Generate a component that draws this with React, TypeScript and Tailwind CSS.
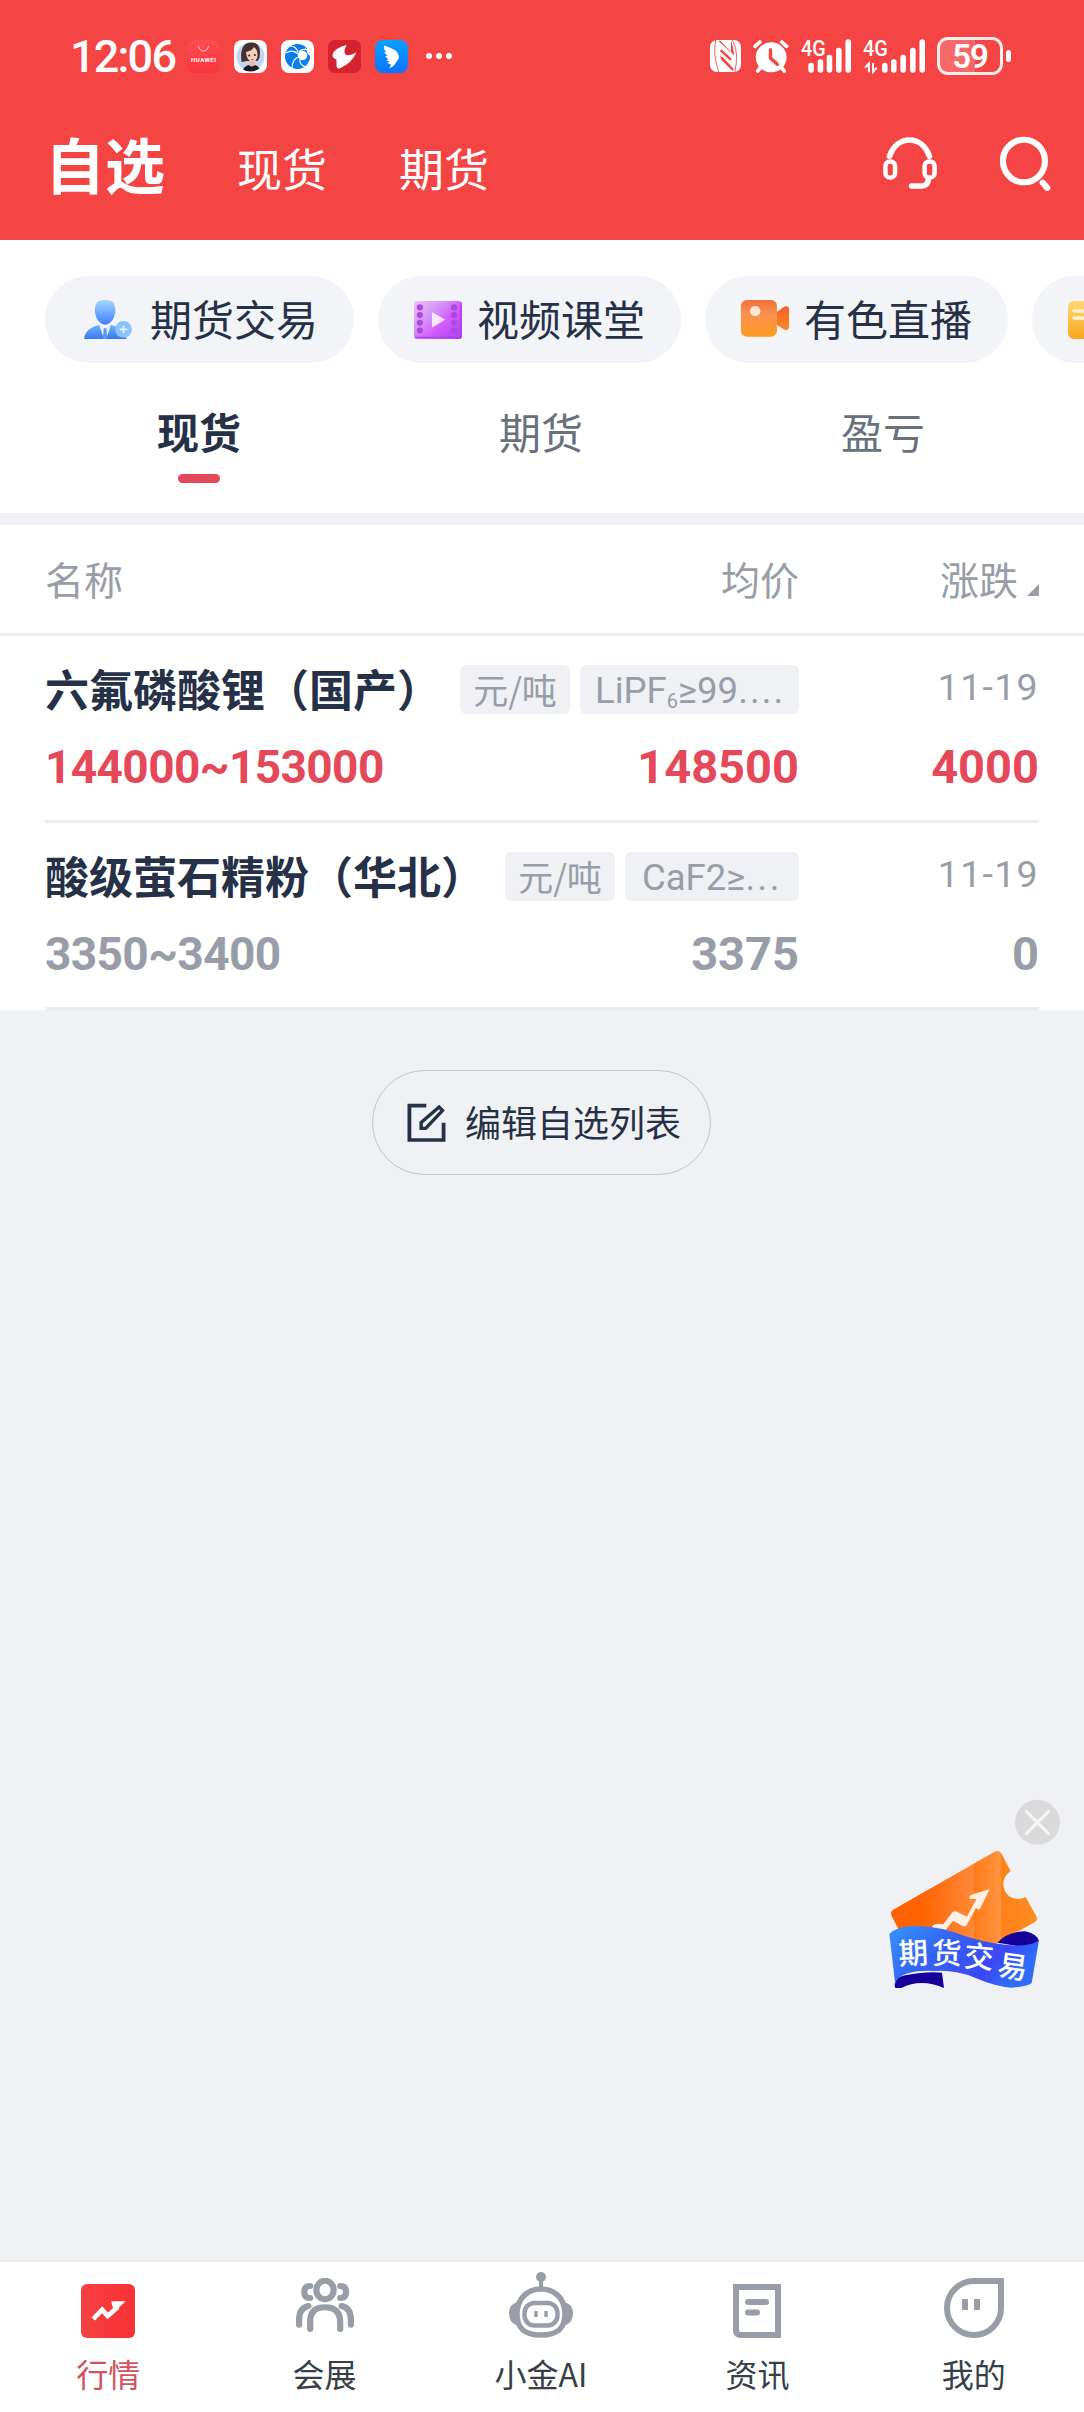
import type { ReactNode } from 'react'
import clsx from 'clsx'

const quotes = [
  {
    name: '六氟磷酸锂（国产）',
    unit: '元/吨',
    spec: <>LiPF<span className="relative top-[5px] text-[20px]">6</span>≥99<span className="tracking-[2.2px]">....</span></>,
    specClass: 'w-[219px] pl-[15px]',
    range: '144000~153000',
    avg: '148500',
    change: '4000',
    date: '11-19',
    up: true,
  },
  {
    name: '酸级萤石精粉（华北）',
    unit: '元/吨',
    spec: <>CaF2≥<span className="tracking-[2.5px]">...</span></>,
    specClass: 'w-[174px] pl-[17px]',
    range: '3350~3400',
    avg: '3375',
    change: '0',
    date: '11-19',
    up: false,
  },
]

function StatusBar() {
  return (
    <div className="flex h-[112px] items-center justify-between pl-[70px] pr-[73px]">
      <div className="flex items-center">
        <span className="mt-[2px] w-[117px] whitespace-nowrap font-['Roboto'] text-[45px] font-medium leading-[56px] tracking-[-1.8px]">12:06</span>
        <div className="flex gap-[14px]">
          {/* Huawei mall */}
          <svg className="h-[33px] w-[33px]" viewBox="0 0 33 33">
            <defs>
              <linearGradient id="hw" x1="0" y1="0" x2="0" y2="1">
                <stop offset="0" stopColor="#fd4d50" />
                <stop offset="1" stopColor="#f8343f" />
              </linearGradient>
            </defs>
            <rect width="33" height="33" rx="8" fill="url(#hw)" />
            <path d="M11.5 6q1 5 5 5t5-5" fill="none" stroke="#ffd9d9" strokeWidth="1" />
            <text x="16.5" y="21.5" textAnchor="middle" textLength="25" fontFamily="Roboto" fontWeight="700" fontSize="6" fill="#fff">HUAWEI</text>
          </svg>
          {/* avatar */}
          <svg className="h-[33px] w-[33px]" viewBox="0 0 33 33">
            <rect width="33" height="33" rx="8" fill="#fff" />
            <circle cx="16.5" cy="16.5" r="14" fill="#c3d7f1" />
            <path d="M7.500 22C6 10 9 2.500 17 2.500S27 8 25.500 18l-2 3H13z" fill="#45322f" />
            <path d="M12 12q6-1 8-5 4 3 3.500 9-1 6-5 6-6-1-6.500-10z" fill="#f3cdb9" />
            <path d="M15.500 21h5v5h-5z" fill="#e9b9a3" />
            <path d="M9 29.500q2-4 6-4.500 2.500 3 6 0 3 .5 4.500 3.500-4 3-9 3t-7.500-2z" fill="#1d1b22" />
            <circle cx="15.200" cy="15.500" r="1" fill="#2b2020" />
            <circle cx="20.800" cy="15" r="1" fill="#2b2020" />
            <path d="M17 19.500h2.500" stroke="#c7524f" strokeWidth="1" />
          </svg>
          {/* browser swirl */}
          <svg className="h-[33px] w-[33px]" viewBox="0 0 33 33">
            <rect width="33" height="33" rx="8" fill="#fff" />
            <circle cx="16.500" cy="16.500" r="12.500" fill="#0a7df0" />
            <circle cx="21.500" cy="15.500" r="4.700" fill="#fff" />
            <g fill="none" stroke="#fff" strokeWidth="1.200">
              <path d="M18 13Q19 8 29 10" />
              <path d="M17 14Q12 9 5 13" />
              <path d="M17.500 17Q11 19 11 29" />
              <path d="M19 19Q18 25 25 27" />
              <path d="M17 12Q15 6 9 6" />
            </g>
            <path d="M24 8q5 2 5.500 8l-3-2q0-3-2.500-6z" fill="#fff" />
          </svg>
          {/* red bird */}
          <svg className="h-[33px] w-[33px]" viewBox="0 0 33 33">
            <rect width="33" height="33" rx="7" fill="#d5242f" />
            <path d="M18.500 5Q6 8 4.500 15q0 3 4 4.500l0 7q1 3 4 1.500Q24 23 28.500 12q-6 4-10 3-4-2 0-10z" fill="#fff" />
          </svg>
          {/* blue wing */}
          <svg className="h-[33px] w-[33px]" viewBox="0 0 33 33">
            <defs>
              <linearGradient id="wing" x1="0" y1="0" x2="0" y2="1">
                <stop offset="0" stopColor="#08a0ff" />
                <stop offset="1" stopColor="#0874ff" />
              </linearGradient>
            </defs>
            <rect width="33" height="33" rx="8" fill="url(#wing)" />
            <path d="M9 5.500Q20 9 22 12q2 3 2 6l-5 7.500-4.500 3 1.500-4-4-1.500 2.500-1-3.500-2 2.500-.5-3.500-3.500 2.500 0-3.500-4 2.500.3Q8.500 10 9 5.500z" fill="#fff" />
          </svg>
        </div>
        <div className="ml-[18px] flex gap-[4px]">
          <i className="size-[6px] rounded-full bg-white" />
          <i className="size-[6px] rounded-full bg-white" />
          <i className="size-[6px] rounded-full bg-white" />
        </div>
      </div>

      <div className="flex items-center gap-[12px]">
        {/* NFC */}
        <svg className="h-[32px] w-[31px]" viewBox="486 122 90 95" preserveAspectRatio="none">
          <rect x="486" y="122" width="90" height="95" rx="20" fill="#fff" />
          <path d="M503 120q-5 22-3 45t12 54M550 120q12 20 13 45t-5 54" fill="none" stroke="#f54444" strokeWidth="2.500" />
          <path d="M510 124l37 36v-38q8 24 9 46l-39-43zM516 168l38 46-36-34z" fill="#f54444" />
          <path d="M517 152l30 29M519 173l34 38" stroke="#f54444" strokeWidth="7" />
        </svg>
        {/* alarm */}
        <svg className="h-[33px] w-[36px]" viewBox="610 120 105 99" preserveAspectRatio="none">
          <circle cx="663" cy="172" r="45" fill="#fff" />
          <g stroke="#fff" strokeWidth="11" strokeLinecap="round">
            <path d="M616 139l14-13M708 139l-14-13M632 202l-8 11M693 202l8 11" />
          </g>
          <path d="M661 149v26l20 18" fill="none" stroke="#f54444" strokeWidth="10" strokeLinecap="round" strokeLinejoin="round" />
        </svg>
        <svg className="h-[34px] w-[50px] overflow-visible" viewBox="750 115 144 102" preserveAspectRatio="none">
          <text x="750" y="165" textLength="71" lengthAdjust="spacingAndGlyphs" fontFamily="Roboto" fontWeight="500" fontSize="66" fill="#fff">4G</text>
          <g stroke="#fff" strokeWidth="16" strokeLinecap="round">
            <path d="M779 194v14M806 184v24M832 170v38M859 149v59M886 124v84" />
          </g>
        </svg>
        <svg className="h-[34px] w-[62px] overflow-visible" viewBox="929 115 179 102" preserveAspectRatio="none">
          <text x="929" y="165" textLength="72" lengthAdjust="spacingAndGlyphs" fontFamily="Roboto" fontWeight="500" fontSize="66" fill="#fff">4G</text>
          <g stroke="#fff" strokeWidth="16" strokeLinecap="round">
            <path d="M992 194v14M1018 184v24M1045 170v38M1073 149v59M1100 124v84" />
          </g>
          <path d="M946 215v-26l-11 12M958 187v26l11-12" fill="none" stroke="#fff" strokeWidth="6" />
        </svg>
        <div className="flex items-center gap-[3px]">
          <div className="flex h-[38px] w-[66px] items-center justify-center overflow-hidden rounded-[11px] border-[3px] border-white/90 bg-linear-to-r from-white/20 from-58% to-transparent to-58% font-['Roboto'] text-[33px] font-semibold leading-none tracking-[-1px]">
            59
          </div>
          <i className="h-[12px] w-[5px] rounded-full bg-white" />
        </div>
      </div>
    </div>
  )
}

function Header() {
  return (
    <header className="h-[240px] bg-[#f54444] text-white">
      <StatusBar />
      <div className="flex h-[102px] items-center pl-[45px] pr-[33px]">
        <h1 className="-mt-px text-[60px] font-bold leading-[60px]">自选</h1>
        <span className="ml-[72px] mt-[10px] text-[45px] leading-[60px]">现货</span>
        <span className="ml-[72px] mt-[10px] text-[45px] leading-[60px]">期货</span>
        <svg className="ml-auto h-[52px] w-[54px]" viewBox="986 413 157 155" preserveAspectRatio="none">
          <g fill="none" stroke="#fff" strokeLinecap="round">
            <path d="M1005 470c10-28 30-48 58-48s48 20 58 48" strokeWidth="17" />
            <rect x="993" y="486" width="28" height="48" rx="13" strokeWidth="13" />
            <rect x="1107" y="486" width="29" height="48" rx="13" strokeWidth="13" />
            <path d="M1118 536q0 23-20 23h-29" strokeWidth="16" />
          </g>
        </svg>
        <svg className="ml-[63px] h-[55px] w-[51px]" viewBox="1325 406 148 165" preserveAspectRatio="none">
          <ellipse cx="1394.500" cy="481" rx="61" ry="64" fill="none" stroke="#fff" strokeWidth="18" />
          <path d="M1449 546l13 16" stroke="#fff" strokeWidth="18" strokeLinecap="round" />
        </svg>
      </div>
    </header>
  )
}

function Chip({ icon, label, className }: { icon: ReactNode; label?: string; className?: string }) {
  return (
    <div className={clsx('flex h-[87px] shrink-0 items-center rounded-full bg-[#f2f4f8]', className)}>
      {icon}
      {label && <span className="-mt-[3px] whitespace-nowrap text-[42px] leading-[60px] text-[#263147]">{label}</span>}
    </div>
  )
}

function Chips() {
  return (
    <div className="flex gap-[24px] overflow-hidden pl-[45px] pt-[36px]">
      <Chip
        className="w-[309px] pl-[39px]"
        label="期货交易"
        icon={
          <svg className="mr-[18px] h-[41px] w-[48px] shrink-0" viewBox="242 146 141 123" preserveAspectRatio="none">
            <defs>
              <linearGradient id="head" x1="0" y1="0" x2="0" y2="1">
                <stop offset="0" stopColor="#a5dcfe" />
                <stop offset="1" stopColor="#3f7dff" />
              </linearGradient>
              <linearGradient id="suit" x1="0" y1="0" x2="0" y2="1">
                <stop offset="0" stopColor="#6cb4fd" />
                <stop offset="1" stopColor="#3a78f2" />
              </linearGradient>
            </defs>
            <path d="M304 148c22 0 30 10 30 32 0 20-12 43-30 43s-30-23-30-43c0-22 8-32 30-32z" fill="url(#head)" />
            <path d="M242 266c3-27 25-37 45-42l17 14 17-14c20 5 42 15 46 42z" fill="url(#suit)" />
            <path d="M287 224l11 34 6-20 6 20 11-34-17 12z" fill="#e4f1ff" />
            <path d="M300 234h8l2 32h-12z" fill="#5a9cfb" />
            <circle cx="358" cy="237" r="25" fill="#8cc3ff" />
            <path d="M358 226v22M347 237h22" stroke="#e6f4ff" strokeWidth="5" />
          </svg>
        }
      />
      <Chip
        className="w-[303px] pl-[36px]"
        label="视频课堂"
        icon={
          <svg className="mr-[15px] h-[38px] w-[48px] shrink-0" viewBox="1199 153 139 113" preserveAspectRatio="none">
            <defs>
              <linearGradient id="film" x1="0" y1="0" x2="1" y2=".8">
                <stop offset="0" stopColor="#efc4fb" />
                <stop offset=".4" stopColor="#d391f8" />
                <stop offset=".65" stopColor="#d45cff" />
                <stop offset="1" stopColor="#b04af3" />
              </linearGradient>
            </defs>
            <rect x="1199" y="153" width="139" height="113" rx="10" fill="url(#film)" />
            <path d="M1203 261h132V158" fill="none" stroke="#b03cf0" strokeWidth="4" />
            <g fill="#ae49dd">
              {[172, 195, 218, 241].map((y) => (
                <g key={y}>
                  <circle cx="1216" cy={y} r="9" />
                  <circle cx="1315" cy={y} r="9" />
                </g>
              ))}
            </g>
            <path d="M1251 186v46l38-23z" fill="#fae6ff" />
          </svg>
        }
      />
      <Chip
        className="w-[303px] pl-[36px]"
        label="有色直播"
        icon={
          <svg className="-mt-[2px] mr-[15px] h-[37px] w-[48px] shrink-0" viewBox="576 153 139 109" preserveAspectRatio="none">
            <defs>
              <linearGradient id="cam" x1="0" y1="0" x2="0" y2="1">
                <stop offset="0" stopColor="#f0703a" />
                <stop offset=".4" stopColor="#fa9150" />
                <stop offset="1" stopColor="#ff9b22" />
              </linearGradient>
              <linearGradient id="lens" x1="0" y1="0" x2="0" y2="1">
                <stop offset="0" stopColor="#f2602a" />
                <stop offset="1" stopColor="#fb8a22" />
              </linearGradient>
            </defs>
            <path d="M678 190l24-18q13-3 13 8v52q-1 12-13 9l-24-16z" fill="url(#lens)" />
            <rect x="576" y="153" width="104" height="108" rx="17" fill="url(#cam)" />
            <circle cx="617" cy="186" r="15" fill="#ffe6d3" />
          </svg>
        }
      />
      <Chip
        className="w-[303px] pl-[36px]"
        icon={
          <svg className="h-[38px] w-[40px] shrink-0" viewBox="0 0 40 38">
            <defs>
              <linearGradient id="note" x1="0" y1="0" x2="0" y2="1">
                <stop offset="0" stopColor="#ffd873" />
                <stop offset="1" stopColor="#fba61f" />
              </linearGradient>
            </defs>
            <rect width="40" height="38" rx="6" fill="url(#note)" />
            <path d="M6 10h20M6 17h20" stroke="#fff2cc" strokeWidth="3.500" strokeLinecap="round" />
          </svg>
        }
      />
    </div>
  )
}

function Tabs() {
  return (
    <div className="grid h-[150px] grid-cols-3 pl-[28px] pr-[30px] pt-[38px] text-center text-[42px] leading-[60px] text-[#6a717e]">
      <div className="flex flex-col items-center">
        <span className="font-bold text-[#263147]">现货</span>
        <i className="mt-[13px] h-[9px] w-[42px] rounded-full bg-[#e54858]" />
      </div>
      <span>期货</span>
      <span>盈亏</span>
    </div>
  )
}

function QuoteTable() {
  return (
    <section className="bg-white">
      <div className="flex h-[111px] items-center border-b-[3px] border-[#ebebeb] px-[45px] pb-[3px] text-[39px] leading-[60px] text-[#989da8]">
        <span className="flex w-[754px] justify-between">
          <span>名称</span>
          <span>均价</span>
        </span>
        <span className="ml-auto">涨跌</span>
        <svg className="ml-[9px] mt-[24px] h-[12px] w-[12px]" viewBox="0 0 12 12">
          <path d="M12 0v12H0z" fill="#989da8" />
        </svg>
      </div>
      {quotes.map((q) => (
        <div key={q.name} className="mx-[45px] h-[187px] border-b-[3px] border-[#ebebeb] pt-[23px]">
          <div className="flex h-[60px] items-center">
            <h3 className="-mt-[2px] whitespace-nowrap text-[44px] font-bold leading-[60px] text-[#263147]">{q.name}</h3>
            <div className="ml-auto mr-[240px] flex gap-[10px] text-[#989da8]">
              <span className="flex h-[49px] w-[110px] justify-center whitespace-nowrap rounded-[6px] bg-[#f0f1f4] text-[35px] leading-[47px]">{q.unit}</span>
              <span className={clsx("h-[49px] whitespace-nowrap rounded-[6px] bg-[#f0f1f4] font-['Roboto','Noto_Sans_CJK_SC'] text-[36.5px] leading-[52px]", q.specClass)}>{q.spec}</span>
            </div>
            <span className="-ml-[240px] -mt-[5px] w-[240px] text-right font-['Roboto'] text-[37.5px] leading-[50px] tracking-[1.3px] text-[#989da8]">{q.date}</span>
          </div>
          <div className={clsx("mt-[18px] flex items-center justify-between font-['Roboto'] font-bold leading-[60px]", q.up ? 'text-[#e54858]' : 'text-[#989da8]')}>
            <span className="w-[400px] text-[46px] tracking-[-0.6px]">{q.range}</span>
            <span className="w-[354px] text-right text-[47px]">{q.avg}</span>
            <span className="w-[240px] text-right text-[47px]">{q.change}</span>
          </div>
        </div>
      ))}
    </section>
  )
}

function EditButton() {
  return (
    <button className="ml-[372px] mt-[60px] flex h-[105px] w-[339px] items-center rounded-full border border-[#c2c5cf] pl-[34px] text-[36px] leading-[60px] text-[#263147]">
      <svg className="mr-[19px] h-[39px] w-[39px]" viewBox="1176 876 113 118" preserveAspectRatio="none">
        <g fill="none" stroke="#263147" strokeWidth="11">
          <path d="M1232 884h-49v104h99v-52" />
          <path d="M1217 953v-18l52-47 10 11-49 54z" strokeWidth="10" />
        </g>
      </svg>
      <span className="-mt-[3px]">编辑自选列表</span>
    </button>
  )
}

function FloatingAd() {
  return (
    <div className="absolute right-0 top-[1780px]">
      <svg className="h-[230px] w-[220px]" viewBox="0 0 660 690">
        <defs>
          <linearGradient id="ticket" x1="0" y1="0" x2="1" y2="0">
            <stop offset=".2" stopColor="#ff6200" />
            <stop offset=".57" stopColor="#ff8a38" />
            <stop offset=".57" stopColor="#ff7a18" />
            <stop offset=".75" stopColor="#ff9540" />
            <stop offset=".75" stopColor="#ff8118" />
            <stop offset="1" stopColor="#ff8c24" />
          </linearGradient>
          <linearGradient id="ribbon" x1="0" y1="0" x2="1" y2=".4">
            <stop offset="0" stopColor="#3495fb" />
            <stop offset=".4" stopColor="#3465f4" />
            <stop offset=".8" stopColor="#3b47f6" />
            <stop offset="1" stopColor="#2f6cf8" />
          </linearGradient>
        </defs>
        <circle cx="520.500" cy="127" r="67.500" fill="#dadada" />
        <path d="M487 94l67 67M554 94l-67 67" stroke="#f4f5f6" strokeWidth="9" strokeLinecap="round" />
        <path d="M86 390L392 215q13-6 20 5l28 54a42 42 0 1 0 45 77l33 60q4 9-5 15L300 545 130 500 82 406q-4-10 4-16z" fill="url(#ticket)" />
        <path d="M204 440q8-12 34-7l27-36q8-5 14-2l30 15 28-53-21-1q-2-6 5-11l56-18-29 60q-8 4-12-4l-28 52q-4 6-12 3l-29-16-20 26-20 12z" fill="#fff0e5" />
        <path d="M400 488q30-34 85-34 35 8 40 30-30 18-65 14z" fill="#17009a" />
        <path d="M94 624q-10-30 30-38 60-12 110-8l6 46q-70-30-128 0z" fill="#17009a" />
        <path d="M76 462q20-22 76-24 70-2 160 33 80 24 145 26 45 0 68-16l-22 128q-10 10-60 14-50-4-110-30-60-24-120-20-80-4-110 22-10 10-9 20z" fill="url(#ribbon)" />
        <g fill="#fff" fontFamily="Noto Sans CJK SC" fontWeight="500" fontSize="89" textAnchor="middle">
          <text x="148" y="552" transform="rotate(-3 148 520)">期</text>
          <text x="248" y="552" transform="rotate(1 248 520)">货</text>
          <text x="345" y="563" transform="rotate(5 345 530)">交</text>
          <text x="446" y="592" transform="rotate(8 446 560)">易</text>
        </g>
      </svg>
    </div>
  )
}

function NavItem({ label, active, children }: { label: string; active?: boolean; children: ReactNode }) {
  return (
    <div className="flex flex-col items-center">
      <div className="flex h-[76px] items-end">{children}</div>
      <span className={clsx('mt-[5px] text-[32px] leading-[60px]', active ? 'text-[#d4515d]' : 'text-[#383e49]')}>{label}</span>
    </div>
  )
}

function BottomNav() {
  return (
    <nav className="grid h-[151px] grid-cols-5 border-t border-[#e9eaec] bg-white pr-[2px]">
      <NavItem label="行情" active>
        <svg className="h-[54px] w-[54px]" viewBox="233 132 158 162" preserveAspectRatio="none">
          <defs>
            <linearGradient id="market" x1="0" y1="0" x2="1" y2="0">
              <stop offset="0" stopColor="#f54144" />
              <stop offset="1" stopColor="#fa3034" />
            </linearGradient>
          </defs>
          <rect x="233" y="132" width="158" height="162" rx="18" fill="url(#market)" />
          <path d="M269 237l26-28 16 19 30-27" fill="none" stroke="#fff" strokeWidth="14" />
          <path d="M321 184h43l-34 32z" fill="#fff" />
        </svg>
      </NavItem>
      <NavItem label="会展">
        <svg className="mb-[6px] h-[54px] w-[58px]" viewBox="853 114 168 162" preserveAspectRatio="none">
          <g fill="none" stroke="#989da8" strokeWidth="18" strokeLinecap="round">
            <ellipse cx="937" cy="150" rx="25" ry="28" />
            <path d="M894 138q-17 0-17 18t17 18M981 138q17 0 17 18t-17 18" />
            <path d="M894 267v-22q0-43 43-43t44 43v22" />
            <path d="M862 254v-14q0-36 27-42M1012 254v-14q0-36-27-42" />
          </g>
        </svg>
      </NavItem>
      <NavItem label="小金AI">
        <svg className="h-[66px] w-[64px]" viewBox="0 0 64 66">
          <circle cx="32" cy="5" r="5" fill="#989da8" />
          <path d="M32 5v12" stroke="#989da8" strokeWidth="4" />
          <path d="M9 30Q0 32 0 41t7 12zM55 30q9 2 9 11t-7 12z" fill="#989da8" />
          <path d="M32 17c12 0 24 8 24 25 0 14-7 21-24 21S8 56 8 42c0-17 12-25 24-25z" fill="#fff" stroke="#989da8" strokeWidth="5.500" />
          <rect x="15.500" y="31" width="33" height="22.500" rx="10" fill="none" stroke="#989da8" strokeWidth="4.500" />
          <path d="M27 39v6M37 39v6" stroke="#989da8" strokeWidth="3.500" />
        </svg>
      </NavItem>
      <NavItem label="资讯">
        <svg className="h-[54px] w-[48px]" viewBox="0 0 48 54">
          <path d="M3 3h42v48H8q-5 0-5-5z" fill="none" stroke="#989da8" strokeWidth="6" />
          <path d="M15 18h18M15 28.500h9" stroke="#989da8" strokeWidth="6" strokeLinecap="round" />
        </svg>
      </NavItem>
      <NavItem label="我的">
        <svg className="h-[60px] w-[60px]" viewBox="0 0 60 60">
          <path d="M57 3H30a27 27 0 1 0 27 27z" fill="none" stroke="#989da8" strokeWidth="6" />
          <path d="M21 21v11M33 21v11" stroke="#989da8" strokeWidth="6" />
        </svg>
      </NavItem>
    </nav>
  )
}

export default function App() {
  return (
    <div className="relative flex h-[2412px] w-[1084px] flex-col overflow-hidden bg-[#f0f1f4] font-['Noto_Sans_CJK_SC',sans-serif]">
      <Header />
      <div className="mb-[12px] h-[273px] bg-white">
        <Chips />
        <Tabs />
      </div>
      <QuoteTable />
      <EditButton />
      <div className="mt-auto">
        <BottomNav />
      </div>
      <FloatingAd />
    </div>
  )
}
